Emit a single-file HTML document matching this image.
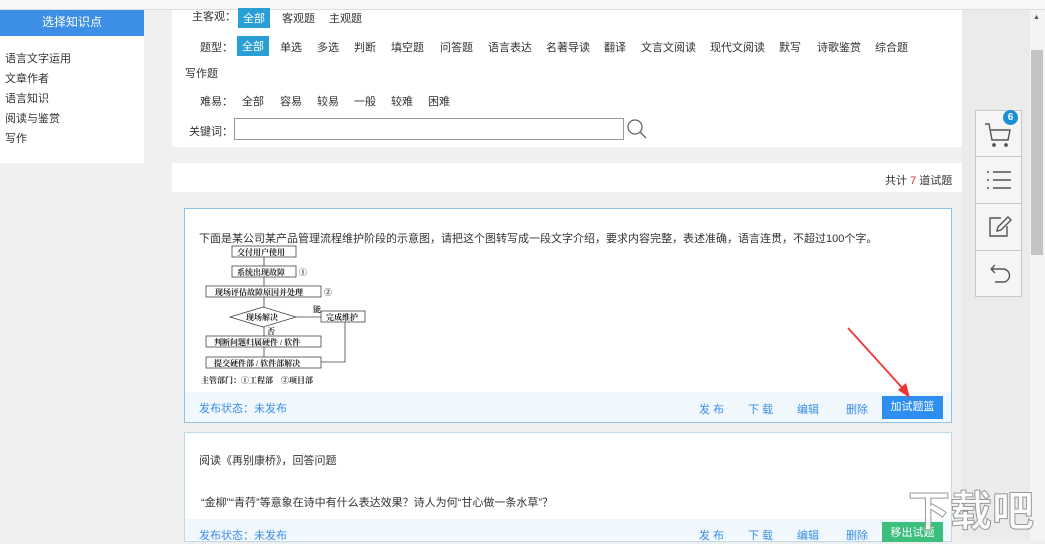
<!DOCTYPE html>
<html><head><meta charset="utf-8"><style>
*{margin:0;padding:0;box-sizing:border-box}
body{width:1045px;height:540px;overflow:hidden;background:#efefef;font-family:"Liberation Sans","Noto Sans CJK SC",sans-serif;font-size:11px;color:#333;position:relative}
.a{position:absolute;white-space:nowrap}
.w{background:#fff}
.sel{background:#2a9fd6;color:#fff;padding:2px 5px}
.lnk{color:#3a8ee6}
</style></head><body>
<div class="a" style="left:0;top:0;width:1045px;height:10px;background:#f7f7f7;border-bottom:1px solid #ddd"></div>
<div class="a w" style="left:0;top:10px;width:144px;height:153px"></div>
<div class="a" style="left:0;top:10px;width:144px;height:26px;background:#3d8fe6;color:#fff;font-size:12px;text-align:center;line-height:24px">选择知识点</div>
<div class="a" style="left:5px;top:49px;line-height:20px;font-size:11px">语言文字运用<br>文章作者<br>语言知识<br>阅读与鉴赏<br>写作</div>

<div class="a w" style="left:172px;top:10px;width:790px;height:137px"></div>
<div class="a" style="left:192px;top:10px;line-height:15px">主客观：</div>
<div class="a sel" style="left:238px;top:8px">全部</div>
<div class="a" style="left:282px;top:10px">客观题</div>
<div class="a" style="left:329px;top:10px">主观题</div>
<div class="a" style="left:200px;top:39px">题型：</div>
<div class="a sel" style="left:237px;top:36px">全部</div>
<div class="a" style="left:280px;top:39px">单选</div>
<div class="a" style="left:317px;top:39px">多选</div>
<div class="a" style="left:354px;top:39px">判断</div>
<div class="a" style="left:391px;top:39px">填空题</div>
<div class="a" style="left:440px;top:39px">问答题</div>
<div class="a" style="left:488px;top:39px">语言表达</div>
<div class="a" style="left:546px;top:39px">名著导读</div>
<div class="a" style="left:604px;top:39px">翻译</div>
<div class="a" style="left:641px;top:39px">文言文阅读</div>
<div class="a" style="left:710px;top:39px">现代文阅读</div>
<div class="a" style="left:779px;top:39px">默写</div>
<div class="a" style="left:817px;top:39px">诗歌鉴赏</div>
<div class="a" style="left:875px;top:39px">综合题</div>
<div class="a" style="left:185px;top:65px">写作题</div>
<div class="a" style="left:200px;top:93px">难易：</div>
<div class="a" style="left:242px;top:93px">全部</div>
<div class="a" style="left:280px;top:93px">容易</div>
<div class="a" style="left:317px;top:93px">较易</div>
<div class="a" style="left:354px;top:93px">一般</div>
<div class="a" style="left:391px;top:93px">较难</div>
<div class="a" style="left:428px;top:93px">困难</div>
<div class="a" style="left:189px;top:123px">关键词：</div>
<div class="a w" style="left:234px;top:118px;width:390px;height:22px;border:1px solid #999"></div>
<svg class="a" style="left:626px;top:118px" width="22" height="22"><circle cx="9" cy="9" r="7" fill="none" stroke="#666" stroke-width="1.3"/><line x1="14" y1="14" x2="20" y2="20" stroke="#666" stroke-width="1.3"/></svg>

<div class="a w" style="left:172px;top:163px;width:790px;height:29px"></div>
<div class="a" style="left:885px;top:172px">共计 <span style="color:#d33">7</span> 道试题</div>

<div class="a w" style="left:184px;top:208px;width:768px;height:215px;border:1px solid #8fc1e0"></div>
<div class="a" style="left:199px;top:230px">下面是某公司某产品管理流程维护阶段的示意图，请把这个图转写成一段文字介绍，要求内容完整，表述准确，语言连贯，不超过100个字。</div>
<svg class="a" style="left:195px;top:243px;font-family:'Liberation Serif','Noto Serif CJK SC',serif;font-size:8px;font-weight:bold" width="200" height="145">
<g fill="none" stroke="#444" stroke-width="0.8">
<rect x="37" y="3" width="64" height="11"/><rect x="37" y="23" width="64" height="11"/><rect x="11" y="43" width="115" height="11"/>
<polygon points="35,74 68,64 101,74 68,84"/><rect x="126" y="68" width="44" height="11"/>
<rect x="11" y="93" width="115" height="11"/><rect x="11" y="114" width="115" height="11"/>
<path d="M69 14V23M69 34V43M69 54V64M69 84V93M69 104V114M101 74H126M126 119H150V79"/>
</g>
<g fill="#222"><text x="42" y="12">交付用户使用</text><text x="42" y="32">系统出现故障</text><text x="104" y="32">①</text><text x="20" y="52">现场评估故障原因并处理</text><text x="129" y="52">②</text><text x="51" y="77">现场解决</text><text x="118" y="69">能</text><text x="131" y="77">完成维护</text><text x="72" y="91">否</text><text x="19" y="102">判断问题归属硬件 / 软件</text><text x="19" y="123">提交硬件部 / 软件部解决</text><text x="6" y="140">主管部门：①工程部　②项目部</text></g>
</svg>
<div class="a" style="left:185px;top:392px;width:766px;height:30px;background:#f0f7fd"></div>
<div class="a lnk" style="left:199px;top:400px">发布状态：未发布</div>
<div class="a lnk" style="left:699px;top:401px">发 布</div>
<div class="a lnk" style="left:748px;top:401px">下 载</div>
<div class="a lnk" style="left:797px;top:401px">编辑</div>
<div class="a lnk" style="left:846px;top:401px">删除</div>
<div class="a" style="left:882px;top:396px;width:61px;height:23px;background:#2d8ef0;color:#fff;text-align:center;line-height:23px">加试题篮</div>
<svg class="a" style="left:840px;top:320px" width="75" height="80"><line x1="8" y1="8" x2="66" y2="72" stroke="#e33" stroke-width="1.8"/><polygon points="70,78 58,70 66,63" fill="#e33"/></svg>

<div class="a w" style="left:184px;top:432px;width:768px;height:110px;border:1px solid #bcdbe8"></div>
<div class="a" style="left:199px;top:452px">阅读《再别康桥》，回答问题</div>
<div class="a" style="left:201px;top:494px">“金柳”“青荇”等意象在诗中有什么表达效果？诗人为何“甘心做一条水草”？</div>
<div class="a" style="left:185px;top:519px;width:766px;height:21px;background:#f0f7fd"></div>
<div class="a lnk" style="left:199px;top:527px">发布状态：未发布</div>
<div class="a lnk" style="left:699px;top:527px">发 布</div>
<div class="a lnk" style="left:748px;top:527px">下 载</div>
<div class="a lnk" style="left:797px;top:527px">编辑</div>
<div class="a lnk" style="left:846px;top:527px">删除</div>
<div class="a" style="left:882px;top:522px;width:61px;height:20px;background:#3cbf7c;color:#fff;text-align:center;line-height:22px">移出试题</div>

<div class="a" style="left:962px;top:10px;width:68px;height:530px;background:#ebebeb"></div>
<div class="a" style="left:1030px;top:10px;width:15px;height:530px;background:#f4f4f4"></div>
<div class="a" style="left:1031px;top:50px;width:12px;height:205px;background:#c4c4c4"></div>
<div class="a" style="left:1033px;top:14px;font-size:7px;color:#555">▲</div>
<div class="a" style="left:975px;top:110px;width:47px;height:187px;background:#f5f5f5;border:1px solid #c8c8c8"></div>
<div class="a" style="left:975px;top:156px;width:47px;height:1px;background:#c8c8c8"></div>
<div class="a" style="left:975px;top:203px;width:47px;height:1px;background:#c8c8c8"></div>
<div class="a" style="left:975px;top:250px;width:47px;height:1px;background:#c8c8c8"></div>
<svg class="a" style="left:983px;top:120px" width="30" height="30" fill="none" stroke="#555" stroke-width="1.4"><path d="M2 4H6L9 20H25L27 10H8"/><circle cx="11" cy="25" r="1.2" fill="#555"/><circle cx="23" cy="25" r="1.2" fill="#555"/></svg>
<div class="a" style="left:1003px;top:110px;width:15px;height:15px;border-radius:50%;background:#1a8fd6;color:#fff;font-size:10px;font-weight:bold;text-align:center;line-height:15px">6</div>
<svg class="a" style="left:985px;top:168px" width="28" height="26" stroke="#555" stroke-width="1.4"><path d="M2 4H4M2 12H4M2 20H4M8 4H26M8 12H26M8 20H26"/></svg>
<svg class="a" style="left:987px;top:214px" width="26" height="26" fill="none" stroke="#555" stroke-width="1.4"><path d="M14 4H3V22H20V12"/><path d="M10 17L11 13L21 3L24 6L14 16Z"/></svg>
<svg class="a" style="left:987px;top:262px" width="26" height="26" fill="none" stroke="#555" stroke-width="1.4"><path d="M4 7H16A6 6 0 0 1 16 20H8M4 7L8 3M4 7L8 11"/></svg>
<div class="a" style="left:908px;top:478px;font-size:42px;color:rgba(255,255,255,.85);-webkit-text-stroke:1px #999;font-weight:bold">下载吧</div>
</body></html>
